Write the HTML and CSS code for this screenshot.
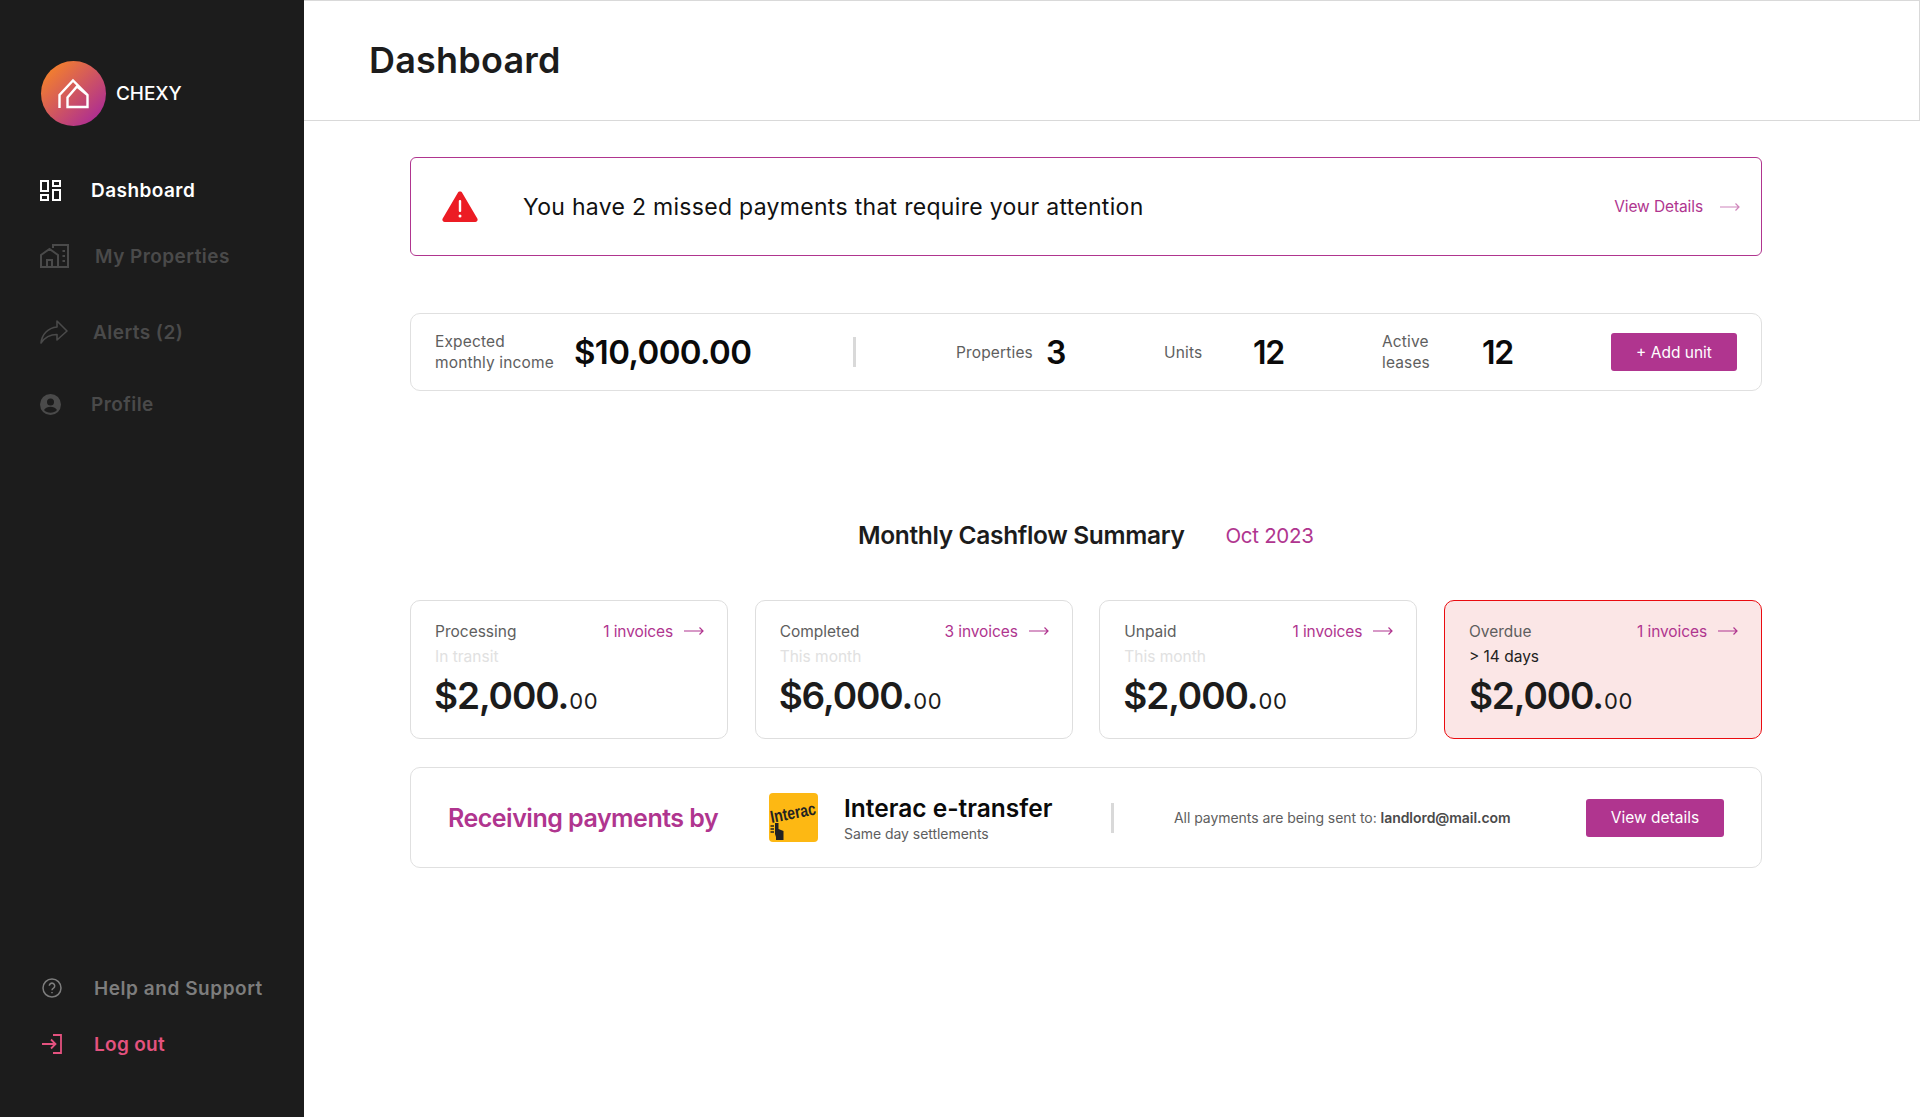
FILE: index.html
```html
<!DOCTYPE html>
<html lang="en">
<head>
<meta charset="utf-8">
<title>Chexy Dashboard</title>
<link rel="stylesheet" href="styles.css">
</head>
<body>
<div class="app">
  <aside class="sidebar">
    <div class="brand">
      <div class="logo">
        <svg width="36" height="34" viewBox="20 20 36 34" fill="none" stroke="#fff" stroke-width="2.400" stroke-linejoin="miter">
          <path d="M23.500 51V38L37 23.500 51.500 38v12H31.500V40.500L41 29.500 51.500 38"/>
        </svg>
      </div>
      <span class="brand-name">CHEXY</span>
    </div>
    <nav class="nav">
      <a class="nav-item active item-dash">
        <svg class="ic" width="21" height="21" viewBox="0 0 21 21" fill="none" stroke="#fff" stroke-width="2"><rect x="1" y="1" width="7" height="10"/><rect x="13" y="1" width="7" height="5"/><rect x="1" y="15" width="7" height="5"/><rect x="13" y="10" width="7" height="10"/></svg>
        <span>Dashboard</span>
      </a>
      <a class="nav-item item-prop">
        <svg class="ic" width="29" height="24" viewBox="0 0 29 24" fill="none" stroke="#4a4a4a" stroke-width="2"><path d="M1 23V11l8.500-6 8.500 6v12z"/><path d="M7 23v-7h5v7"/><path d="M13 4V1h15v22H18"/><path d="M22.500 7h2.500M22.500 12h2.500M22.500 17h2.500"/></svg>
        <span>My Properties</span>
      </a>
      <a class="nav-item item-alert">
        <svg class="ic" width="28" height="24" viewBox="0 0 28 24" fill="none" stroke="#4a4a4a" stroke-width="1.600" stroke-linejoin="round"><path d="M17 1l10 10-10 9v-5.500C10 14.500 5 17 1 23c1-9 7-15 16-16z"/></svg>
        <span>Alerts (2)</span>
      </a>
      <a class="nav-item item-profile">
        <svg class="ic" width="21" height="21" viewBox="0 0 21 21"><circle cx="10.500" cy="10.500" r="10.500" fill="#4a4a4a"/><circle cx="10.500" cy="8" r="3.500" fill="#1c1c1c"/><path d="M4 16c1.500-2.500 4-3.300 6.500-3.300s5 .8 6.500 3.300c-1.500 1.800-4 2.800-6.500 2.800S5.500 17.800 4 16z" fill="#1c1c1c"/></svg>
        <span>Profile</span>
      </a>
    </nav>
    <div class="foot">
      <a class="foot-item help">
        <svg width="20" height="20" viewBox="0 0 20 20" fill="none" stroke="#7d7d7d" stroke-width="1.500"><circle cx="10" cy="10" r="9"/><path d="M7.300 7.800a2.700 2.700 0 1 1 4.200 2.300c-1 .6-1.500 1.100-1.500 2.100"/><path d="M10 14v1.300"/></svg>
        <span>Help and Support</span>
      </a>
      <a class="foot-item logout">
        <svg width="20" height="20" viewBox="0 0 20 20" fill="none" stroke="#e4527f" stroke-width="1.800"><path d="M11 1h8v18h-8"/><path d="M0 10h13M9 5.500l4.500 4.500L9 14.500"/></svg>
        <span>Log out</span>
      </a>
    </div>
  </aside>
  <div class="content">
    <header class="topbar"><h1>Dashboard</h1></header>
    <main class="main">
      <section class="alert">
        <svg width="36" height="31" viewBox="0 0 36 31"><path d="M18 0.500c1 0 1.800.5 2.300 1.400l15 25.700c.9 1.600-.2 3.400-2 3.400H2.700c-1.800 0-2.900-1.800-2-3.400l15-25.700C16.200 1 17 .5 18 .5z" fill="#ec1c24"/><rect x="16.800" y="9" width="2.400" height="12" rx="1" fill="#fff"/><circle cx="18" cy="25" r="1.500" fill="#fff"/></svg>
        <p class="alert-text">You have 2 missed payments that require your attention</p>
        <a class="link link-alert">View Details
          <svg class="arrow faded" width="20" height="10" viewBox="0 0 20 10" fill="none" stroke="#b0358f" stroke-width="1.200"><path d="M0 5h19M15.500 1.500L19 5l-3.500 3.500"/></svg>
        </a>
      </section>

      <section class="stats">
        <div class="stat-label income-label">Expected<br>monthly income</div>
        <div class="income">$10,000.00</div>
        <div class="vline stats-line"></div>
        <div class="stat-label prop-label">Properties</div>
        <div class="num prop-num">3</div>
        <div class="stat-label units-label">Units</div>
        <div class="num units-num">12</div>
        <div class="stat-label lease-label">Active<br>leases</div>
        <div class="num lease-num">12</div>
        <a class="btn add-btn">+ Add unit</a>
      </section>

      <section class="summary-head">
        <h2>Monthly Cashflow Summary</h2>
        <span class="month">Oct 2023</span>
      </section>

      <section class="cards">
        <article class="card">
          <div class="card-top"><span class="card-title">Processing</span><a class="link">1 invoices <svg class="arrow" width="20" height="10" viewBox="0 0 20 10" fill="none" stroke="#b0358f" stroke-width="1.200"><path d="M0 5h19M15.500 1.500L19 5l-3.500 3.500"/></svg></a></div>
          <div class="card-sub">In transit</div>
          <div class="amount">$2,000.<small>00</small></div>
        </article>
        <article class="card">
          <div class="card-top"><span class="card-title">Completed</span><a class="link">3 invoices <svg class="arrow" width="20" height="10" viewBox="0 0 20 10" fill="none" stroke="#b0358f" stroke-width="1.200"><path d="M0 5h19M15.500 1.500L19 5l-3.500 3.500"/></svg></a></div>
          <div class="card-sub">This month</div>
          <div class="amount">$6,000.<small>00</small></div>
        </article>
        <article class="card">
          <div class="card-top"><span class="card-title">Unpaid</span><a class="link">1 invoices <svg class="arrow" width="20" height="10" viewBox="0 0 20 10" fill="none" stroke="#b0358f" stroke-width="1.200"><path d="M0 5h19M15.500 1.500L19 5l-3.500 3.500"/></svg></a></div>
          <div class="card-sub">This month</div>
          <div class="amount">$2,000.<small>00</small></div>
        </article>
        <article class="card overdue">
          <div class="card-top"><span class="card-title">Overdue</span><a class="link">1 invoices <svg class="arrow" width="20" height="10" viewBox="0 0 20 10" fill="none" stroke="#b0358f" stroke-width="1.200"><path d="M0 5h19M15.500 1.500L19 5l-3.500 3.500"/></svg></a></div>
          <div class="card-sub">&gt; 14 days</div>
          <div class="amount">$2,000.<small>00</small></div>
        </article>
      </section>

      <section class="payments">
        <div class="pay-title">Receiving payments by</div>
        <svg class="interac" width="49" height="49" viewBox="0 0 49 49">
          <rect width="49" height="49" rx="4" fill="#fdb813"/>
          <text x="0" y="0" class="interac-text" transform="translate(2.500 30) rotate(-11) scale(1 1.250)">Interac</text>
          <path d="M6 30h3.500v6l5 2v9H7v-3l-1-3z" fill="#222"/>
          <path d="M1.500 33h3.500M1.500 36h3.500M1.500 39h3.500" stroke="#222" stroke-width="1.500"/>
        </svg>
        <div class="pay-method">
          <div class="pay-name">Interac e-transfer</div>
          <div class="pay-sub">Same day settlements</div>
        </div>
        <div class="vline pay-line"></div>
        <div class="pay-note">All payments are being sent to: <b>landlord@mail.com</b></div>
        <a class="btn details-btn">View details</a>
      </section>
    </main>
  </div>
</div>
</body>
</html>
```

FILE: styles.css
```css
* { box-sizing: border-box; }
html, body { margin: 0; padding: 0; height: 100%; }
body { font-family: Inter, "Liberation Sans", sans-serif; color: #1c1c1c; background: #fff; }
.app { display: flex; height: 1117px; overflow: hidden; }

.sidebar { width: 304px; flex: none; background: #1c1c1c; display: flex; flex-direction: column; padding: 61px 0 0 40px; }
.brand { display: flex; align-items: center; gap: 10px; margin-left: 1px; }
.logo { width: 65px; height: 65px; border-radius: 50%; background: linear-gradient(135deg, #f5822a 10%, #b0308f 85%); display: flex; align-items: center; justify-content: center; }
.brand-name { color: #fff; font-size: 19px; font-weight: 500; letter-spacing: -0.1px; }
.nav { display: flex; flex-direction: column; margin-top: 50px; }
.nav-item { display: flex; align-items: center; font-size: 19px; font-weight: 600; color: #4a4a4a; height: 28px; letter-spacing: 0.45px; }
.nav-item.active { color: #fff; }
.item-dash .ic { margin-right: 30px; }
.item-prop { margin-top: 38px; }
.item-prop .ic { margin-right: 26px; }
.item-alert { margin-top: 48px; }
.item-alert .ic { margin-right: 25px; }
.item-profile { margin-top: 44px; }
.item-profile .ic { margin-right: 30px; }
.foot { margin-top: auto; padding-bottom: 59px; display: flex; flex-direction: column; gap: 28px; }
.foot-item { display: flex; align-items: center; gap: 32px; font-size: 19px; font-weight: 600; height: 28px; margin-left: 2px; letter-spacing: 0.55px; }
.help { color: #7d7d7d; }
.logout { color: #e4527f; letter-spacing: 0.3px; }

.content { flex: 1; display: flex; flex-direction: column; min-width: 0; }
.topbar { height: 121px; flex: none; border: 1px solid #d9d9d9; border-left: 0; display: flex; align-items: center; padding-left: 65px; padding-bottom: 2px; }
.topbar h1 { margin: 0; font-size: 36px; font-weight: 600; letter-spacing: 0.2px; color: #1c1c1c; }
.main { padding: 36px 158px 0 106px; display: flex; flex-direction: column; }

.alert { height: 99px; border: 1.500px solid #b0358f; border-radius: 6px; display: flex; align-items: center; padding: 0 21px 0 31px; }
.alert-text { margin: 0 0 0 45px; flex: 1; font-size: 23px; font-weight: 400; color: #111; letter-spacing: 0.3px; }
.link { color: #b0358f; font-size: 15.500px; display: inline-flex; align-items: center; white-space: nowrap; letter-spacing: -0.1px; }
.arrow { margin-left: 11px; }
.link-alert { gap: 6px; }
.faded { opacity: .6; }

.stats { height: 78px; margin-top: 57px; border: 1.500px solid #e0e0e0; border-radius: 10px; display: flex; align-items: center; padding-left: 24px; padding-right: 24px; }
.stat-label { font-size: 15.500px; line-height: 21px; color: #5e5e5e; letter-spacing: 0.15px; }
.income-label { width: 139px; white-space: nowrap; }
.income { font-size: 33px; font-weight: 600; color: #0a0a0a; width: 279px; letter-spacing: -0.6px; }
.vline { width: 3px; background: #d9d9d9; flex: none; }
.stats-line { height: 30px; }
.prop-label { margin-left: 100px; width: 90px; }
.num { font-size: 32px; font-weight: 600; color: #0a0a0a; letter-spacing: -1.4px; }
.prop-num { width: 118px; }
.units-label { width: 89px; }
.units-num { width: 129px; }
.lease-label { width: 100px; }
.lease-num { flex: 1; }
.btn { background: #b0358f; color: #fff; border-radius: 3px; font-size: 15.500px; display: flex; align-items: center; justify-content: center; height: 38px; }
.add-btn { width: 126px; }

.summary-head { display: flex; align-items: center; margin-top: 130px; padding-left: 448px; height: 28px; margin-bottom: 1px; }
.summary-head h2 { margin: 0; font-size: 24.500px; font-weight: 600; color: #1c1c1c; letter-spacing: -0.35px; }
.month { margin-left: 41px; font-size: 20.500px; color: #b0358f; letter-spacing: -0.3px; }

.cards { display: grid; grid-template-columns: repeat(4, 1fr); gap: 26.500px; margin-top: 50px; }
.card { height: 139px; border: 1.500px solid #dedede; border-radius: 10px; padding: 17px 23px 0 24px; }
.card-top { display: flex; justify-content: space-between; align-items: center; height: 26px; }
.card-title { font-size: 15.500px; color: #5e5e5e; letter-spacing: 0; }
.card-sub { font-size: 15.500px; color: #e1e1e1; height: 26px; line-height: 26px; letter-spacing: 0; }
.amount { font-size: 37px; font-weight: 600; color: #1c1c1c; line-height: 50px; margin-top: 1px; margin-left: -1px; letter-spacing: -1.1px; }
.amount small { font-size: 22px; font-weight: 400; letter-spacing: 0.6px; margin-left: 1px; }
.overdue { background: #fbe6e6; border-color: #ea0b10; }
.overdue .amount { margin-left: 0; }
.overdue .card-sub { color: #222; }

.payments { height: 101px; margin-top: 28px; border: 1.500px solid #e0e0e0; border-radius: 10px; display: flex; align-items: center; padding-left: 37px; }
.pay-title { font-size: 25px; font-weight: 600; color: #b0358f; width: 321px; white-space: nowrap; letter-spacing: -0.5px; }
.interac { flex: none; }
.interac-text { font-family: "Liberation Sans", sans-serif; font-size: 14px; font-weight: 700; fill: #222; }
.pay-method { margin-left: 26px; width: 267px; }
.pay-name { font-size: 24.500px; font-weight: 600; color: #0a0a0a; letter-spacing: 0; line-height: 30px; }
.pay-sub { font-size: 14px; color: #5e5e5e; margin-top: 2px; letter-spacing: -0.05px; }
.pay-line { height: 30px; }
.pay-note { margin-left: 60px; width: 412px; font-size: 14px; color: #5e5e5e; letter-spacing: -0.05px; white-space: nowrap; }
.pay-note b { font-weight: 600; color: #4a4a4a; }
.details-btn { width: 138px; }
```
